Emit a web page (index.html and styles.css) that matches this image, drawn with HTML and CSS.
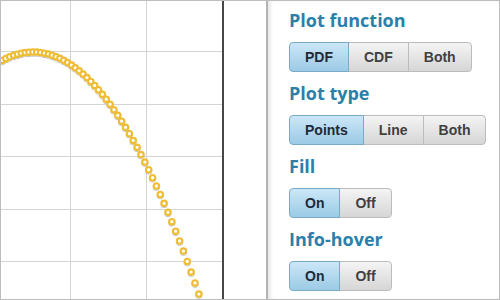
FILE: index.html
```html
<!DOCTYPE html>
<html>
<head>
<meta charset="utf-8">
<link rel="stylesheet" href="styles.css">
</head>
<body>
<div class="frame">
  <div class="chart">
    <svg width="265" height="298" viewBox="1 1 265 298" xmlns="http://www.w3.org/2000/svg">
      <defs>
        <filter id="sh" x="-50%" y="-50%" width="200%" height="200%">
          <feDropShadow dx="0" dy="1" stdDeviation="0.6" flood-color="#000" flood-opacity="0.25"/>
        </filter>
      </defs>
      <g stroke="#d4d4d4" stroke-width="1">
        <line x1="70.5" y1="0" x2="70.5" y2="300"/>
        <line x1="146.5" y1="0" x2="146.5" y2="300"/>
        <line x1="0" y1="51.5" x2="222" y2="51.5"/>
        <line x1="0" y1="104.5" x2="222" y2="104.5"/>
        <line x1="0" y1="156.5" x2="222" y2="156.5"/>
        <line x1="0" y1="209.5" x2="222" y2="209.5"/>
        <line x1="0" y1="261.5" x2="222" y2="261.5"/>
      </g>
      <rect x="222" y="0" width="2" height="300" fill="#474747"/>
      <g fill="#fff" stroke="#efbd36" stroke-width="2.1" filter="url(#sh)">
        <circle cx="2.00" cy="60.46" r="2.7"/>
        <circle cx="5.86" cy="58.48" r="2.7"/>
        <circle cx="9.72" cy="56.77" r="2.7"/>
        <circle cx="13.58" cy="55.32" r="2.7"/>
        <circle cx="17.44" cy="54.13" r="2.7"/>
        <circle cx="21.30" cy="53.20" r="2.7"/>
        <circle cx="25.16" cy="52.54" r="2.7"/>
        <circle cx="29.02" cy="52.14" r="2.7"/>
        <circle cx="32.88" cy="52.00" r="2.7"/>
        <circle cx="36.74" cy="52.12" r="2.7"/>
        <circle cx="40.60" cy="52.51" r="2.7"/>
        <circle cx="44.46" cy="53.16" r="2.7"/>
        <circle cx="48.32" cy="54.07" r="2.7"/>
        <circle cx="52.18" cy="55.24" r="2.7"/>
        <circle cx="56.04" cy="56.67" r="2.7"/>
        <circle cx="59.90" cy="58.37" r="2.7"/>
        <circle cx="63.76" cy="60.33" r="2.7"/>
        <circle cx="67.62" cy="62.55" r="2.7"/>
        <circle cx="71.48" cy="65.03" r="2.7"/>
        <circle cx="75.34" cy="67.78" r="2.7"/>
        <circle cx="79.20" cy="70.78" r="2.7"/>
        <circle cx="83.06" cy="74.05" r="2.7"/>
        <circle cx="86.92" cy="77.58" r="2.7"/>
        <circle cx="90.78" cy="81.38" r="2.7"/>
        <circle cx="94.64" cy="85.44" r="2.7"/>
        <circle cx="98.50" cy="89.75" r="2.7"/>
        <circle cx="102.36" cy="94.34" r="2.7"/>
        <circle cx="106.22" cy="99.18" r="2.7"/>
        <circle cx="110.08" cy="104.28" r="2.7"/>
        <circle cx="113.94" cy="109.65" r="2.7"/>
        <circle cx="117.80" cy="115.28" r="2.7"/>
        <circle cx="121.66" cy="121.17" r="2.7"/>
        <circle cx="125.52" cy="127.33" r="2.7"/>
        <circle cx="129.38" cy="133.74" r="2.7"/>
        <circle cx="133.24" cy="140.42" r="2.7"/>
        <circle cx="137.10" cy="147.36" r="2.7"/>
        <circle cx="140.96" cy="154.56" r="2.7"/>
        <circle cx="144.82" cy="162.03" r="2.7"/>
        <circle cx="148.68" cy="169.76" r="2.7"/>
        <circle cx="152.54" cy="177.75" r="2.7"/>
        <circle cx="156.40" cy="186.00" r="2.7"/>
        <circle cx="160.26" cy="194.52" r="2.7"/>
        <circle cx="164.12" cy="203.29" r="2.7"/>
        <circle cx="167.98" cy="212.33" r="2.7"/>
        <circle cx="171.84" cy="221.63" r="2.7"/>
        <circle cx="175.70" cy="231.20" r="2.7"/>
        <circle cx="179.56" cy="241.02" r="2.7"/>
        <circle cx="183.42" cy="251.11" r="2.7"/>
        <circle cx="187.28" cy="261.46" r="2.7"/>
        <circle cx="191.14" cy="272.07" r="2.7"/>
        <circle cx="195.00" cy="282.95" r="2.7"/>
        <circle cx="198.86" cy="294.08" r="2.7"/>
      </g>
    </svg>
  </div>
  <div class="panel">
    <div class="section">
      <h3 class="title">Plot function</h3>
      <div class="group">
        <span class="btn on">PDF</span><span class="btn">CDF</span><span class="btn">Both</span>
      </div>
    </div>
    <div class="section">
      <h3 class="title">Plot type</h3>
      <div class="group">
        <span class="btn on">Points</span><span class="btn">Line</span><span class="btn">Both</span>
      </div>
    </div>
    <div class="section">
      <h3 class="title">Fill</h3>
      <div class="group">
        <span class="btn on">On</span><span class="btn">Off</span>
      </div>
    </div>
    <div class="section">
      <h3 class="title">Info-hover</h3>
      <div class="group">
        <span class="btn on">On</span><span class="btn">Off</span>
      </div>
    </div>
  </div>
</div>
</body>
</html>
```

FILE: styles.css
```css
html, body {
  margin: 0;
  padding: 0;
  background: #fff;
}
.frame {
  width: 500px;
  height: 300px;
  box-sizing: border-box;
  border: 1px solid #bdbdbd;
  display: flex;
  overflow: hidden;
}
.chart {
  width: 265px;
  height: 298px;
  flex: none;
}
.chart svg {
  display: block;
}
.panel {
  flex: 1;
  border-left: 2px solid #b4b4b4;
  box-shadow: inset 4px 0 4px -2px rgba(0, 0, 0, 0.12);
  padding: 8px 0 0 21px;
}
.section {
  margin-bottom: 10px;
}
.title {
  margin: 0;
  font-family: "Open Sans", "DejaVu Sans", sans-serif;
  font-weight: bold;
  font-size: 18px;
  line-height: 22px;
  color: #2b7fab;
}
.group {
  display: flex;
  margin-top: 11px;
}
.btn {
  box-sizing: border-box;
  height: 30px;
  line-height: 28px;
  padding: 0 15px;
  border: 1px solid #bcbcbc;
  background: linear-gradient(#f4f4f4, #d6d6d6);
  font-family: "Liberation Sans", Arial, sans-serif;
  font-weight: bold;
  font-size: 14px;
  color: #404040;
  margin-left: -1px;
  position: relative;
}
.btn:first-child {
  margin-left: 0;
  border-radius: 4px 0 0 4px;
}
.btn:last-child {
  border-radius: 0 4px 4px 0;
}
.btn.on {
  background: linear-gradient(#cbe7f7, #9ccae5);
  border-color: #79aac9;
  color: #1d2b38;
  z-index: 1;
}
```
